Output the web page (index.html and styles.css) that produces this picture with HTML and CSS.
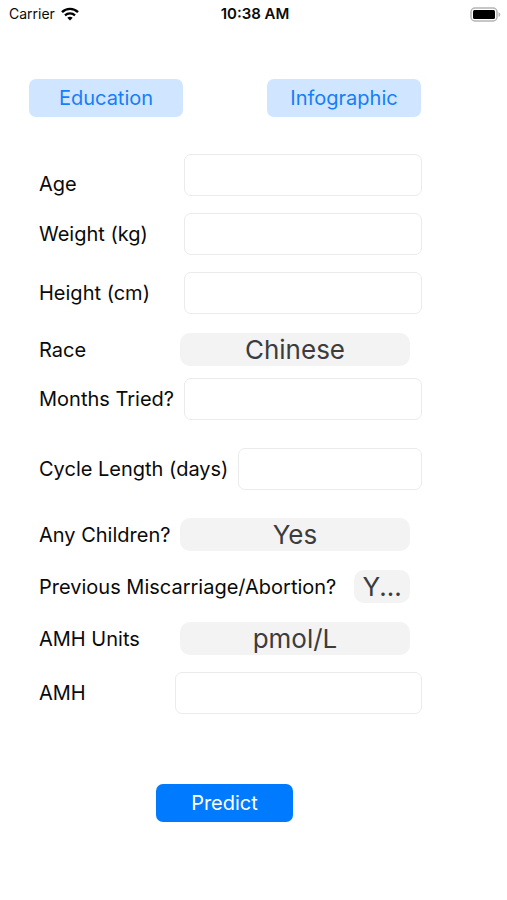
FILE: index.html
```html
<!DOCTYPE html>
<html lang="en">
<head>
<meta charset="utf-8">
<meta name="viewport" content="width=device-width, initial-scale=1">
<title>Predict</title>
<link rel="stylesheet" href="styles.css">
</head>
<body>
<header class="status">
  <div class="carrier">
    <span>Carrier</span>
    <svg class="wifi" viewBox="0 0 18 14" aria-hidden="true">
      <path d="M1 5.2C5.4 .8 12.6 .8 17 5.2" fill="none" stroke="#000" stroke-width="2.4"/>
      <path d="M4 8.3c2.8-2.7 7.2-2.7 10 0" fill="none" stroke="#000" stroke-width="2.3"/>
      <path d="M6.3 10.8c1.5-1.4 3.9-1.4 5.4 0L9 13.6z"/>
    </svg>
  </div>
  <time class="clock">10:38 AM</time>
  <div class="power">
    <svg class="battery" viewBox="0 0 31 15" aria-hidden="true">
      <rect x="1" y="1" width="26" height="13" rx="4" fill="#fff" stroke="#b4b4b4" stroke-width="1.5"/>
      <rect x="3" y="3" width="22" height="9" rx="1.5"/>
      <path d="M28.5 5.2c2.4.8 2.4 3.8 0 4.6z" fill="#b4b4b4"/>
    </svg>
  </div>
</header>
<main>
  <nav class="links">
    <button class="button tinted" type="button">Education</button>
    <button class="button tinted" type="button">Infographic</button>
  </nav>
  <form class="form">
    <div class="row low">
      <label for="age">Age</label>
      <input id="age" type="text">
    </div>
    <div class="row">
      <label for="weight">Weight (kg)</label>
      <input id="weight" type="text">
    </div>
    <div class="row">
      <label for="height">Height (cm)</label>
      <input id="height" type="text">
    </div>
    <div class="row picker">
      <label for="race">Race</label>
      <select id="race"><option>Chinese</option></select>
    </div>
    <div class="row tight">
      <label for="months">Months Tried?</label>
      <input id="months" type="text">
    </div>
    <div class="row apart cycle">
      <label for="cycle">Cycle Length (days)</label>
      <input id="cycle" type="text">
    </div>
    <div class="row picker apart">
      <label for="children">Any Children?</label>
      <select id="children"><option>Yes</option></select>
    </div>
    <div class="row picker compact">
      <label for="previous">Previous Miscarriage/Abortion?</label>
      <select id="previous"><option>Y...</option></select>
    </div>
    <div class="row picker">
      <label for="units">AMH Units</label>
      <select id="units"><option>pmol/L</option></select>
    </div>
    <div class="row amh">
      <label for="amh">AMH</label>
      <input id="amh" type="text">
    </div>
    <button class="button primary" type="button">Predict</button>
  </form>
</main>
</body>
</html>
```
FILE: styles.css
```css
* {
  box-sizing: border-box;
}

body {
  margin: 0;
  background: #fff;
  color: #0a0a0a;
  font-family: Inter, "Liberation Sans", sans-serif;
  font-size: 20px;
  line-height: 24px;
}

.status {
  display: grid;
  grid-template-columns: 1fr auto 1fr;
  align-items: center;
  height: 28px;
  padding: 0 6px 0 9px;
  font-size: 14px;
}

.carrier {
  display: flex;
  align-items: center;
  gap: 6px;
}

.wifi {
  width: 18px;
  height: 14px;
}

.clock {
  font-size: 15px;
  font-weight: 600;
}

.power {
  display: flex;
  justify-content: flex-end;
}

.battery {
  width: 31px;
  height: 15px;
}

.links {
  display: flex;
  justify-content: space-between;
  padding: 51px 86px 0 29px;
}

.button {
  height: 38px;
  border: 0;
  border-radius: 7px;
  font: inherit;
}

.tinted {
  width: 154px;
  background: #d0e5ff;
  color: #147efb;
}

.primary {
  display: block;
  width: 137px;
  margin: 70px auto 0 117px;
  background: #007aff;
  color: #fff;
}

.form {
  padding: 37px 85px 40px 39px;
}

.row {
  display: flex;
  align-items: center;
  margin-top: 17px;
}

.row label {
  flex: 0 0 145px;
  white-space: nowrap;
}

.row input,
.row select {
  flex: 1;
  min-width: 0;
  margin: 0;
  color: #3c3c3c;
  font: inherit;
}

.row input {
  height: 42px;
  padding: 0 10px;
  border: 1px solid #ebebeb;
  border-radius: 7px;
  background: #fff;
}

.row select {
  height: 33px;
  padding: 0;
  border: 0;
  border-radius: 10px;
  appearance: none;
  background: #f3f3f3;
  font-size: 26px;
  line-height: 33px;
  text-align: center;
  text-align-last: center;
}

.low {
  align-items: flex-end;
  margin-top: 0;
}

.picker {
  margin-top: 19px;
  padding-right: 12px;
}

.picker label {
  flex-basis: 141px;
}

.tight {
  margin-top: 12px;
}

.apart {
  margin-top: 28px;
}

.cycle label {
  flex-basis: 199px;
}

.compact label {
  flex: 1;
}

.compact select {
  flex: 0 0 56px;
}

.amh label {
  flex-basis: 136px;
}
```
